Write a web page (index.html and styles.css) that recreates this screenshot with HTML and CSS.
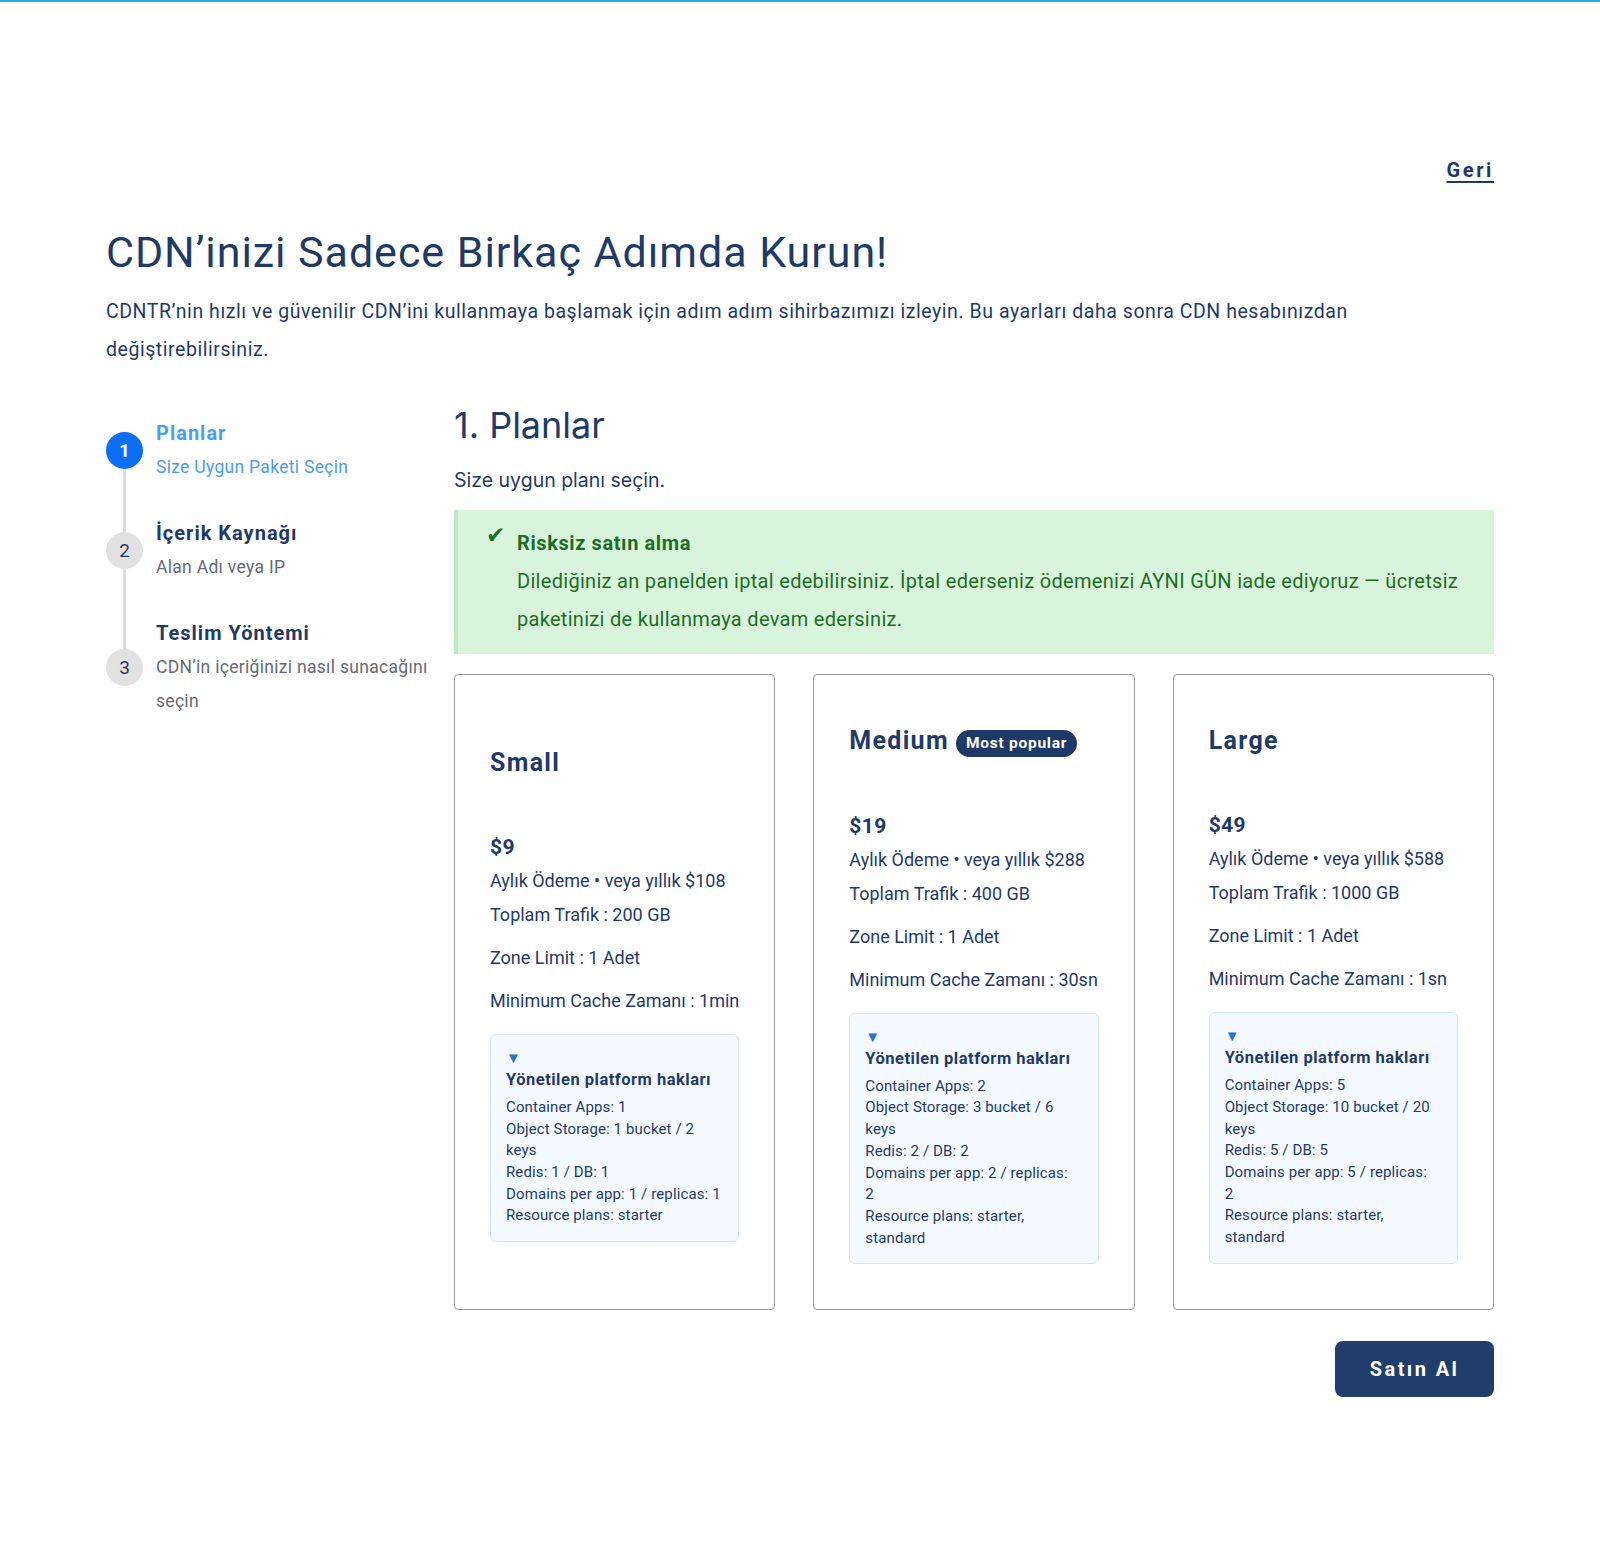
FILE: index.html
```html
<!DOCTYPE html>
<html>

<head>
    <meta charset="utf-8">
    <title>CDN Kurulum</title>
    <link rel="stylesheet" href="styles.css">
</head>

<body>
    <div class="topbar"></div>
    <div class="page">
        <div class="back-row"><a href="#" class="back-link">Geri</a></div>
        <h1 class="page-title">CDN’inizi Sadece Birkaç Adımda Kurun!</h1>
        <p class="page-intro">CDNTR’nin hızlı ve güvenilir CDN’ini kullanmaya başlamak için adım adım sihirbazımızı izleyin. Bu ayarları daha sonra CDN hesabınızdan değiştirebilirsiniz.</p>

        <div class="wizard">
            <ul class="steps">
                <li class="step active">
                    <span class="step-num">1</span>
                    <div class="step-text">
                        <div class="step-title">Planlar</div>
                        <div class="step-sub">Size Uygun Paketi Seçin</div>
                    </div>
                </li>
                <li class="step">
                    <span class="step-num">2</span>
                    <div class="step-text">
                        <div class="step-title">İçerik Kaynağı</div>
                        <div class="step-sub">Alan Adı veya IP</div>
                    </div>
                </li>
                <li class="step">
                    <span class="step-num">3</span>
                    <div class="step-text">
                        <div class="step-title">Teslim Yöntemi</div>
                        <div class="step-sub">CDN’in içeriğinizi nasıl sunacağını seçin</div>
                    </div>
                </li>
            </ul>

            <div class="wizard-main">
                <h2 class="section-title">1. Planlar</h2>
                <p class="section-lead">Size uygun planı seçin.</p>

                <div class="notice">
                    <span class="notice-check">✔</span>
                    <div class="notice-body">
                        <div class="notice-title">Risksiz satın alma</div>
                        <div class="notice-text">Dilediğiniz an panelden iptal edebilirsiniz. İptal ederseniz ödemenizi AYNI GÜN iade ediyoruz — ücretsiz paketinizi de kullanmaya devam edersiniz.</div>
                    </div>
                </div>

                <div class="plans">
                    <div class="plan">
                        <div class="plan-name">Small</div>
                        <div class="plan-price">$9</div>
                        <div class="plan-line">Aylık Ödeme • veya yıllık $108</div>
                        <div class="plan-line">Toplam Trafik : 200 GB</div>
                        <div class="plan-line spaced">Zone Limit : 1 Adet</div>
                        <div class="plan-line spaced">Minimum Cache Zamanı : 1min</div>
                        <div class="rights">
                            <div class="rights-toggle">▼</div>
                            <div class="rights-title">Yönetilen platform hakları</div>
                            <div class="rights-list">
                                <div>Container Apps: 1</div>
                                <div>Object Storage: 1 bucket / 2 keys</div>
                                <div>Redis: 1 / DB: 1</div>
                                <div>Domains per app: 1 / replicas: 1</div>
                                <div>Resource plans: starter</div>
                            </div>
                        </div>
                    </div>

                    <div class="plan">
                        <div class="plan-name">Medium <span class="badge">Most popular</span></div>
                        <div class="plan-price">$19</div>
                        <div class="plan-line">Aylık Ödeme • veya yıllık $288</div>
                        <div class="plan-line">Toplam Trafik : 400 GB</div>
                        <div class="plan-line spaced">Zone Limit : 1 Adet</div>
                        <div class="plan-line spaced">Minimum Cache Zamanı : 30sn</div>
                        <div class="rights">
                            <div class="rights-toggle">▼</div>
                            <div class="rights-title">Yönetilen platform hakları</div>
                            <div class="rights-list">
                                <div>Container Apps: 2</div>
                                <div>Object Storage: 3 bucket / 6 keys</div>
                                <div>Redis: 2 / DB: 2</div>
                                <div>Domains per app: 2 / replicas:<br>2</div>
                                <div>Resource plans: starter, standard</div>
                            </div>
                        </div>
                    </div>

                    <div class="plan">
                        <div class="plan-name">Large</div>
                        <div class="plan-price">$49</div>
                        <div class="plan-line">Aylık Ödeme • veya yıllık $588</div>
                        <div class="plan-line">Toplam Trafik : 1000 GB</div>
                        <div class="plan-line spaced">Zone Limit : 1 Adet</div>
                        <div class="plan-line spaced">Minimum Cache Zamanı : 1sn</div>
                        <div class="rights">
                            <div class="rights-toggle">▼</div>
                            <div class="rights-title">Yönetilen platform hakları</div>
                            <div class="rights-list">
                                <div>Container Apps: 5</div>
                                <div>Object Storage: 10 bucket / 20 keys</div>
                                <div>Redis: 5 / DB: 5</div>
                                <div>Domains per app: 5 / replicas:<br>2</div>
                                <div>Resource plans: starter, standard</div>
                            </div>
                        </div>
                    </div>
                </div>

                <div class="actions">
                    <button class="buy-button">Satın Al</button>
                </div>
            </div>
        </div>
    </div>
</body>

</html>
```

FILE: styles.css
```css
body {
    margin: 0;
    background: #fff;
    color: #1f3a68;
    font-family: Roboto, "Noto Sans", sans-serif;
}

.topbar {
    height: 2px;
    background: #19b2d6;
}

.page {
    width: 1388px;
    margin: 0 auto;
    padding: 156px 0 120px;
}

.back-row {
    display: flex;
    justify-content: flex-end;
    line-height: 24px;
}

.back-link {
    color: #1f3a68;
    font-weight: 700;
    font-size: 20px;
    letter-spacing: 2.6px;
    text-decoration: underline;
    text-underline-offset: 4px;
}

.page-title {
    margin: 45px 0 0;
    font-size: 43px;
    line-height: 50px;
    font-weight: 400;
    letter-spacing: 0.95px;
    color: #1e3a66;
}

.page-intro {
    margin: 16px 0 0;
    font-size: 19.5px;
    line-height: 38px;
    letter-spacing: 0.55px;
    max-width: 1270px;
}

.wizard {
    display: flex;
    margin-top: 34px;
}

/* sol adim listesi */
.steps {
    list-style: none;
    margin: 0;
    padding: 13px 0 0;
    width: 348px;
    flex-shrink: 0;
    position: relative;
    display: flex;
    flex-direction: column;
    gap: 32px;
    align-self: flex-start;
}

.steps::before {
    content: "";
    position: absolute;
    left: 17px;
    top: 40px;
    bottom: 40px;
    width: 3px;
    background: #dcdcdc;
}

.step {
    display: flex;
    align-items: center;
    position: relative;
}

.step-num {
    width: 37px;
    height: 37px;
    border-radius: 50%;
    background: #e1e1e1;
    color: #2a3a5a;
    font-size: 19px;
    display: flex;
    align-items: center;
    justify-content: center;
    flex-shrink: 0;
    z-index: 1;
}

.step.active .step-num {
    background: #0b6ef6;
    color: #fff;
    font-weight: 700;
}

.step-text {
    margin-left: 13px;
}

.step-title {
    font-size: 20px;
    font-weight: 700;
    line-height: 34px;
    letter-spacing: 1px;
    color: #1f3a68;
}

.step-sub {
    font-size: 17.5px;
    line-height: 34px;
    letter-spacing: 0.3px;
    color: #666b73;
}

.step.active .step-title,
.step.active .step-sub {
    color: #4d9cf3;
}

/* sag taraf */
.wizard-main {
    flex: 1;
}

.section-title {
    margin: 0;
    font-family: Inter, sans-serif;
    font-weight: 400;
    font-size: 36px;
    line-height: 44px;
}

.section-lead {
    margin: 18px 0 15px;
    font-family: Inter, sans-serif;
    font-size: 19.5px;
    line-height: 30px;
}

.notice {
    display: flex;
    background: #d8f5dc;
    border-left: 4px solid #bfe8c6;
    padding: 14px 20px 16px 28px;
    color: #1d6d27;
}

.notice-check {
    font-size: 23px;
    line-height: 30px;
    width: 31px;
    flex-shrink: 0;
    margin-top: -3px;
}

.notice-body {
    flex: 1;
}

.notice-title {
    font-weight: 700;
    font-size: 20px;
    line-height: 38px;
    letter-spacing: 0.6px;
}

.notice-text {
    font-size: 20px;
    line-height: 38px;
    letter-spacing: 0.3px;
}

.plans {
    display: grid;
    grid-template-columns: repeat(3, 1fr);
    gap: 38px;
    margin-top: 20px;
}

.plan {
    height: 636px;
    box-sizing: border-box;
    border: 1.5px solid #9a9a9a;
    border-radius: 4px;
    padding: 6px 35px 0;
    display: flex;
    flex-direction: column;
    justify-content: center;
}

.plan-name {
    font-size: 25px;
    font-weight: 700;
    line-height: 30px;
    letter-spacing: 1.3px;
    margin-bottom: 52px;
    display: flex;
    align-items: center;
}

.badge {
    background: #1f3a68;
    color: #fff;
    font-size: 15.5px;
    font-weight: 700;
    border-radius: 14px;
    padding: 0 10px;
    line-height: 27px;
    margin-left: 7px;
    margin-top: 4px;
    letter-spacing: 0.75px;
}

.plan-price {
    font-size: 21px;
    font-weight: 700;
    line-height: 34px;
    letter-spacing: 0.4px;
}

.plan-line {
    font-size: 18px;
    line-height: 34px;
}

.plan-line.spaced {
    margin-top: 9px;
}

.rights {
    margin-top: 16px;
    background: #f4f9ff;
    border: 1px solid #d5e5f6;
    border-radius: 6px;
    padding: 13px 15px 14px;
}

.rights-toggle {
    color: #2b6fdb;
    font-size: 15px;
    line-height: 20px;
}

.rights-title {
    font-size: 16.5px;
    font-weight: 700;
    line-height: 24px;
    letter-spacing: 0.5px;
    margin-bottom: 5px;
}

.rights-list {
    font-size: 15px;
    line-height: 21.7px;
    letter-spacing: 0.12px;
}

.actions {
    display: flex;
    justify-content: flex-end;
    margin-top: 31px;
}

.buy-button {
    background: #213d6b;
    color: #fff;
    border: 0;
    border-radius: 8px;
    width: 159px;
    height: 56px;
    font-family: Roboto, sans-serif;
    font-size: 20px;
    font-weight: 700;
    letter-spacing: 2.4px;
    cursor: pointer;
}
```
